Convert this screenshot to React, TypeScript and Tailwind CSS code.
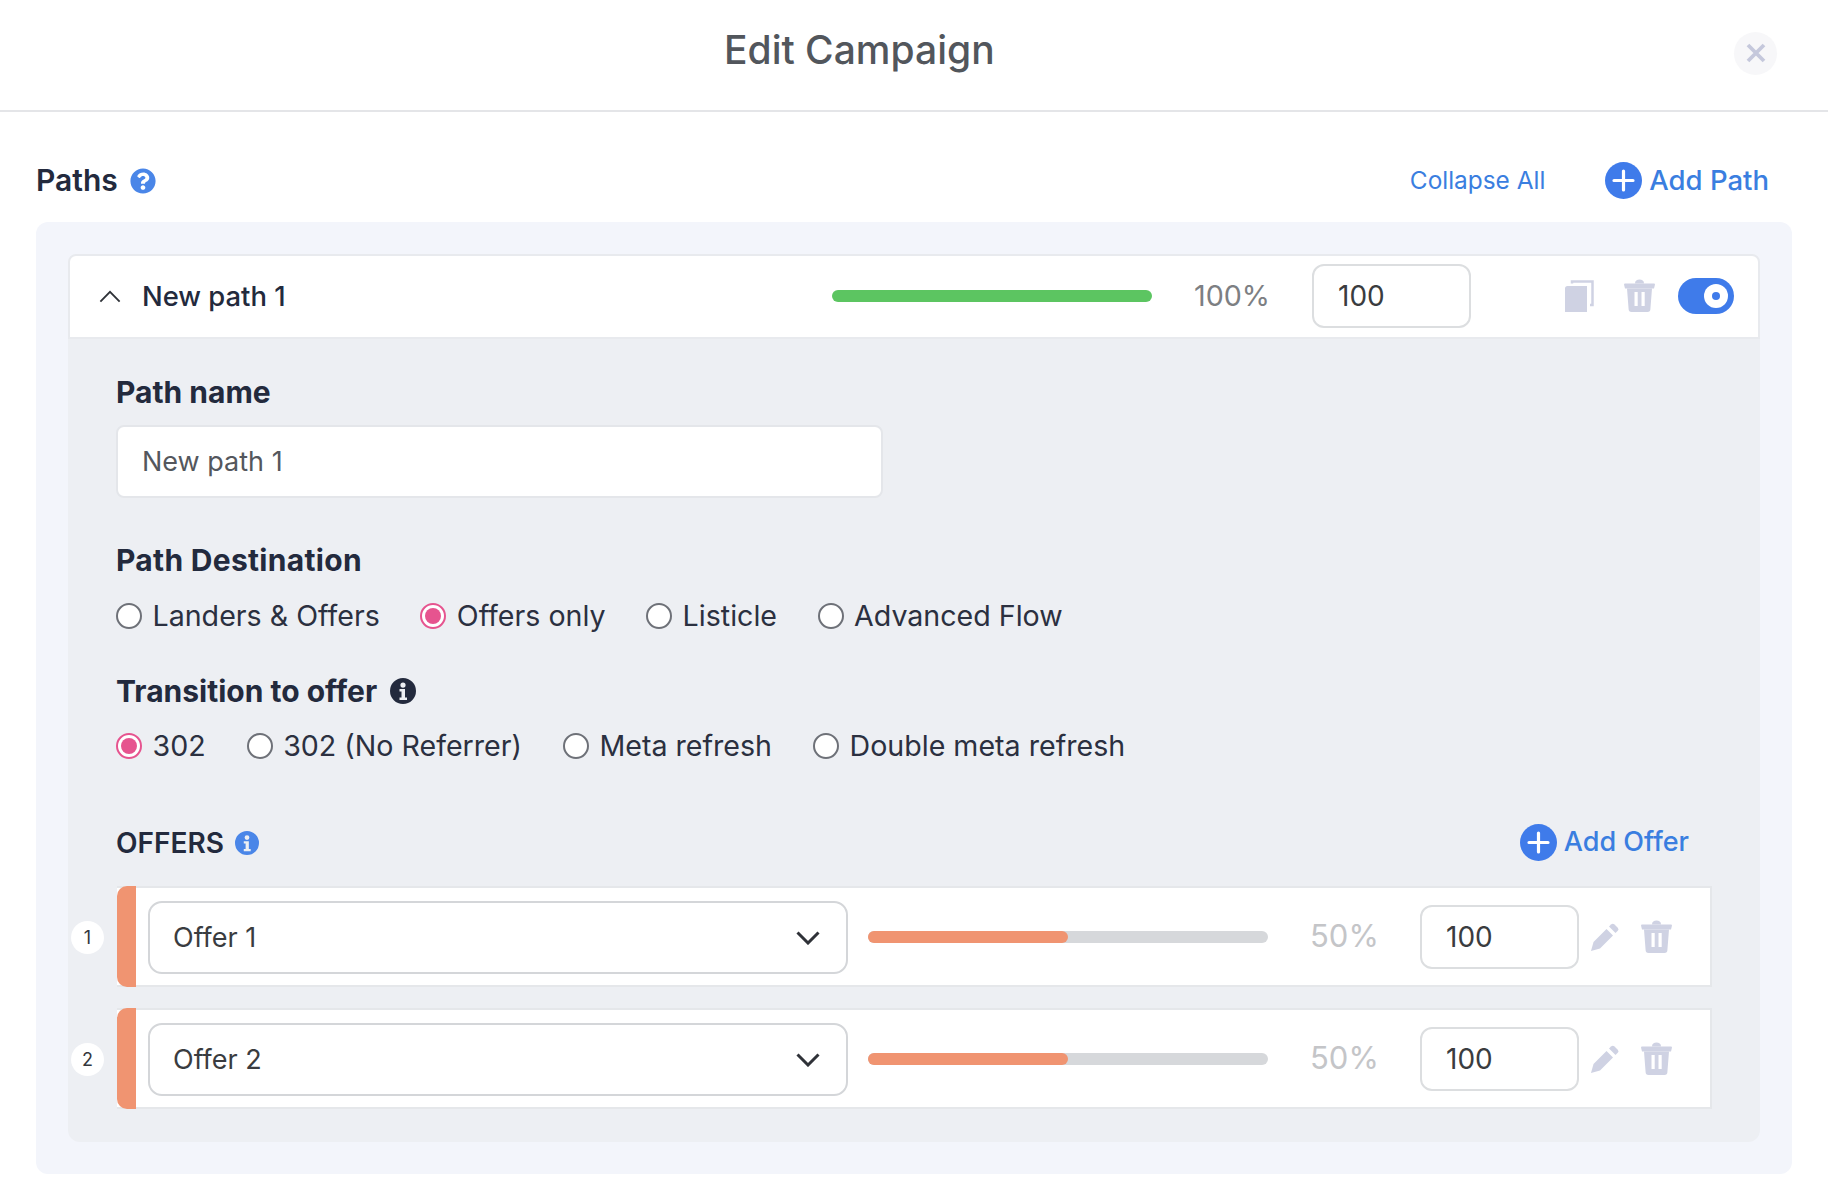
import React from 'react';
import { FaQuestionCircle } from 'react-icons/fa';

// ============================================================================
// ICONS
// ============================================================================

function PlusCircle() {
  return (
    <svg viewBox="0 0 37 37" className="w-[37px] h-[37px] shrink-0">
      <circle cx="18.5" cy="18.5" r="18.5" fill="#3f7bea" />
      <path d="M18.5 9v19M9 18.5h19" stroke="#fff" strokeWidth="3.2" strokeLinecap="round" />
    </svg>
  );
}

function InfoDisc({ className }: { className: string }) {
  return (
    <svg viewBox="0 0 26 26" className={className}>
      <path
        fillRule="evenodd"
        fill="currentColor"
        d="M13 0a13 13 0 1 0 0 26a13 13 0 0 0 0-26ZM13 4.500a2.600 2.600 0 1 1 0 5.200a2.600 2.600 0 0 1 0-5.200ZM9.500 11h5.500v8.500h2V22H9.500v-2.500h2v-6h-2Z"
      />
    </svg>
  );
}

function TrashIcon() {
  return (
    <svg viewBox="0 0 31 33" className="w-[31px] h-[33px] shrink-0">
      <path d="M11 4.5C11 1.5 13 0.5 15.5 0.5S20 1.5 20 4.5Z" fill="#cfd2e3" />
      <path d="M1 4.5h29a1 1 0 0 1 1 1L30 9.5H1L0 5.5a1 1 0 0 1 1-1Z" fill="#cfd2e3" />
      <path
        fillRule="evenodd"
        d="M3 9.5h25l-1.6 20.4A3 3 0 0 1 23.4 33H7.6a3 3 0 0 1-3-3.1ZM10.5 13v14h3.2V13Zm7 0v14h3.2V13Z"
        fill="#cfd2e3"
      />
    </svg>
  );
}

function CopyIcon() {
  return (
    <svg viewBox="0 0 29 32" className="w-[29px] h-[32px] shrink-0">
      <path d="M0 8.5A2.5 2.5 0 0 1 2.500 6H22v26H0Z" fill="#cfd2e3" />
      <path d="M7 3.500V1.500h20.500V25H25" fill="none" stroke="#cfd2e3" strokeWidth="2.500" />
    </svg>
  );
}

function PencilIcon() {
  return (
    <svg viewBox="0 0 28 28" className="w-[28px] h-[28px] shrink-0">
      <path d="M0 28l2.500-9L15.500 6l6.500 6.500L9 25.500Z" fill="#cfd2e3" />
      <path d="M18 3.500l2-2a2.500 2.500 0 0 1 3.500 0l3 3a2.500 2.500 0 0 1 0 3.500l-2 2Z" fill="#cfd2e3" />
    </svg>
  );
}

function Chevron({ up }: { up?: boolean }) {
  return (
    <svg viewBox="0 0 24 14" className={up ? 'w-[22px] h-[13px] shrink-0' : 'w-[24px] h-[14px] shrink-0'}>
      <path
        d={up ? 'M1.500 12.500L12 2l10.500 10.500' : 'M1.500 1.500L12 12l10.500-10.500'}
        fill="none"
        stroke="#2f3238"
        strokeWidth={up ? 2 : 3}
      />
    </svg>
  );
}

// ============================================================================
// FORM BITS
// ============================================================================

function Radio({ label, checked }: { label: string; checked?: boolean }) {
  return (
    <label className="flex items-center gap-[10.5px]">
      {checked ? (
        <span className="w-[26px] h-[26px] rounded-full border-2 border-[#e6548f] bg-white flex items-center justify-center">
          <span className="w-[16px] h-[16px] rounded-full bg-[#e6548f]" />
        </span>
      ) : (
        <span className="w-[26px] h-[26px] rounded-full border-2 border-[#6e7178] bg-white" />
      )}
      <span className="text-[28.6px] leading-[34px] text-[#2b3040]">{label}</span>
    </label>
  );
}

function WeightBox() {
  return (
    <div className="w-[159px] h-[64px] rounded-[12px] border-2 border-[#dcdee0] bg-white flex items-center pl-[24px] text-[28px] text-[#3a3c40]">
      100
    </div>
  );
}

const DESTINATIONS = ['Landers & Offers', 'Offers only', 'Listicle', 'Advanced Flow'];
const TRANSITIONS = ['302', '302 (No Referrer)', 'Meta refresh', 'Double meta refresh'];
const OFFERS = [
  { n: 1, name: 'Offer 1' },
  { n: 2, name: 'Offer 2' },
];

function OfferRow({ n, name }: { n: number; name: string }) {
  return (
    <div className="relative h-[101px] ml-[1px] w-[1595px] bg-white border-b-2 border-t-2 border-r-2 border-[#e5e7ea] flex items-center">
      <span className="absolute left-[-46px] top-[33px] w-[33px] h-[33px] rounded-full bg-white flex items-center justify-center text-[18px] text-[#34373d]">
        {n}
      </span>
      <div className="self-stretch w-[19px] -my-[2px] rounded-l-[10px] bg-[#f09471]" />
      <div className="ml-[12px] mt-[2px] w-[700px] h-[73px] rounded-[14px] border-2 border-[#d4d6d9] bg-white flex items-center justify-between pl-[23px] pr-[26px]">
        <span className="pt-[2px] text-[27px] text-[#3a3c40]">{name}</span>
        <Chevron />
      </div>
      <div className="ml-[20px] w-[400px] h-[12px] rounded-full bg-[#d6d8db]">
        <div className="w-[200px] h-full rounded-full bg-[#f09471]" />
      </div>
      <span className="ml-[42px] w-[110px] text-[31px] text-[#c4c5c8]">50%</span>
      <WeightBox />
      <div className="ml-[12px]">
        <PencilIcon />
      </div>
      <div className="ml-[22px]">
        <TrashIcon />
      </div>
    </div>
  );
}

// ============================================================================
// PAGE
// ============================================================================

export default function App() {
  return (
    <div className="w-[1828px] h-[1202px] bg-white overflow-hidden font-['Inter',sans-serif]">
      {/* Header */}
      <div className="h-[112px] border-b-2 border-[#e4e5e8] flex items-center">
        <h1 className="ml-[724px] mb-[9px] text-[39px] font-medium text-[#52565c]">Edit Campaign</h1>
        <button className="ml-auto mr-[51px] mb-[4px] w-[43px] h-[43px] rounded-full bg-[#f7f7f9] flex items-center justify-center">
          <svg viewBox="0 0 20 20" className="w-[20px] h-[20px]">
            <path d="M2 2l16 16M18 2L2 18" stroke="#c5c8dc" strokeWidth="3.800" />
          </svg>
        </button>
      </div>

      <div className="px-[36px]">
        {/* Paths title row */}
        <div className="h-[110px] flex items-center pt-[33px] pb-[6px]">
          <span className="text-[30px] font-semibold text-[#232a3d]">Paths</span>
          <FaQuestionCircle className="ml-[12px] w-[26px] h-[26px] text-[#4a86e8]" />
          <span className="ml-auto text-[24.4px] text-[#3a7ee0]">Collapse All</span>
          <button className="ml-[60px] mr-[23px] flex items-center gap-[7px]">
            <PlusCircle />
            <span className="text-[27.5px] font-medium text-[#3a7ee0]">Add Path</span>
          </button>
        </div>

        {/* Paths panel */}
        <div className="w-[1756px] h-[952px] rounded-[12px] bg-[#f3f5fb] p-[32px]">
          <div className="h-[888px] rounded-[12px] bg-[#edeff3]">
            {/* Path header */}
            <div className="h-[85px] pb-[2px] rounded-t-[8px] bg-white border-2 border-[#e8eaee] flex items-center">
              <div className="ml-[29px] mt-[2px]">
                <Chevron up />
              </div>
              <span className="ml-[21px] mt-[2px] w-[690px] text-[27.4px] font-medium text-[#232a3d]">New path 1</span>
              <div className="w-[320px] h-[12px] rounded-full bg-[#5cc561]" />
              <span className="ml-[42px] w-[118px] text-[28.7px] text-[#7d7f83]">100%</span>
              <WeightBox />
              <div className="ml-[94px]">
                <CopyIcon />
              </div>
              <div className="ml-[30px]">
                <TrashIcon />
              </div>
              <div className="ml-[23px] w-[56px] h-[36px] rounded-full bg-[#3f7bea] flex items-center justify-end pr-[6px]">
                <span className="w-[24px] h-[24px] rounded-full bg-white flex items-center justify-center">
                  <span className="w-[8px] h-[8px] rounded-full bg-[#3f7bea]" />
                </span>
              </div>
            </div>

            <div className="pl-[48px]">
              {/* Path name */}
              <div className="pt-[36px] text-[30px] leading-[34px] font-bold text-[#232a3d]">Path name</div>
              <div className="mt-[16px] w-[767px] h-[73px] pt-[2px] rounded-[8px] border-2 border-[#e4e6ea] bg-white flex items-center pl-[24px] text-[27px] text-[#54575d]">
                New path 1
              </div>

              {/* Destination */}
              <div className="mt-[45px] text-[30px] leading-[34px] tracking-[0.3px] font-bold text-[#232a3d]">Path Destination</div>
              <div className="mt-[22px] flex items-center gap-[40.5px]">
                {DESTINATIONS.map(d => (
                  <Radio key={d} label={d} checked={d === 'Offers only'} />
                ))}
              </div>

              {/* Transition */}
              <div className="mt-[41px] flex items-center gap-[13px]">
                <span className="text-[30px] leading-[34px] font-bold text-[#232a3d]">Transition to offer</span>
                <InfoDisc className="w-[26px] h-[26px] text-[#232a3d]" />
              </div>
              <div className="mt-[21px] flex items-center gap-[41px]">
                {TRANSITIONS.map(t => (
                  <Radio key={t} label={t} checked={t === '302'} />
                ))}
              </div>

              {/* Offers */}
              <div className="mt-[61px] w-[1595px] h-[37px] flex items-center">
                <span className="text-[28px] font-semibold text-[#232a3d]">OFFERS</span>
                <InfoDisc className="ml-[11px] w-[24px] h-[24px] text-[#4a86e8]" />
                <button className="ml-auto mr-[22px] flex items-center gap-[7px]">
                  <PlusCircle />
                  <span className="text-[27px] font-medium text-[#3a7ee0]">Add Offer</span>
                </button>
              </div>
              <div className="mt-[25px] flex flex-col gap-[21px]">
                {OFFERS.map(o => (
                  <OfferRow key={o.n} n={o.n} name={o.name} />
                ))}
              </div>
            </div>
          </div>
        </div>
      </div>
    </div>
  );
}
